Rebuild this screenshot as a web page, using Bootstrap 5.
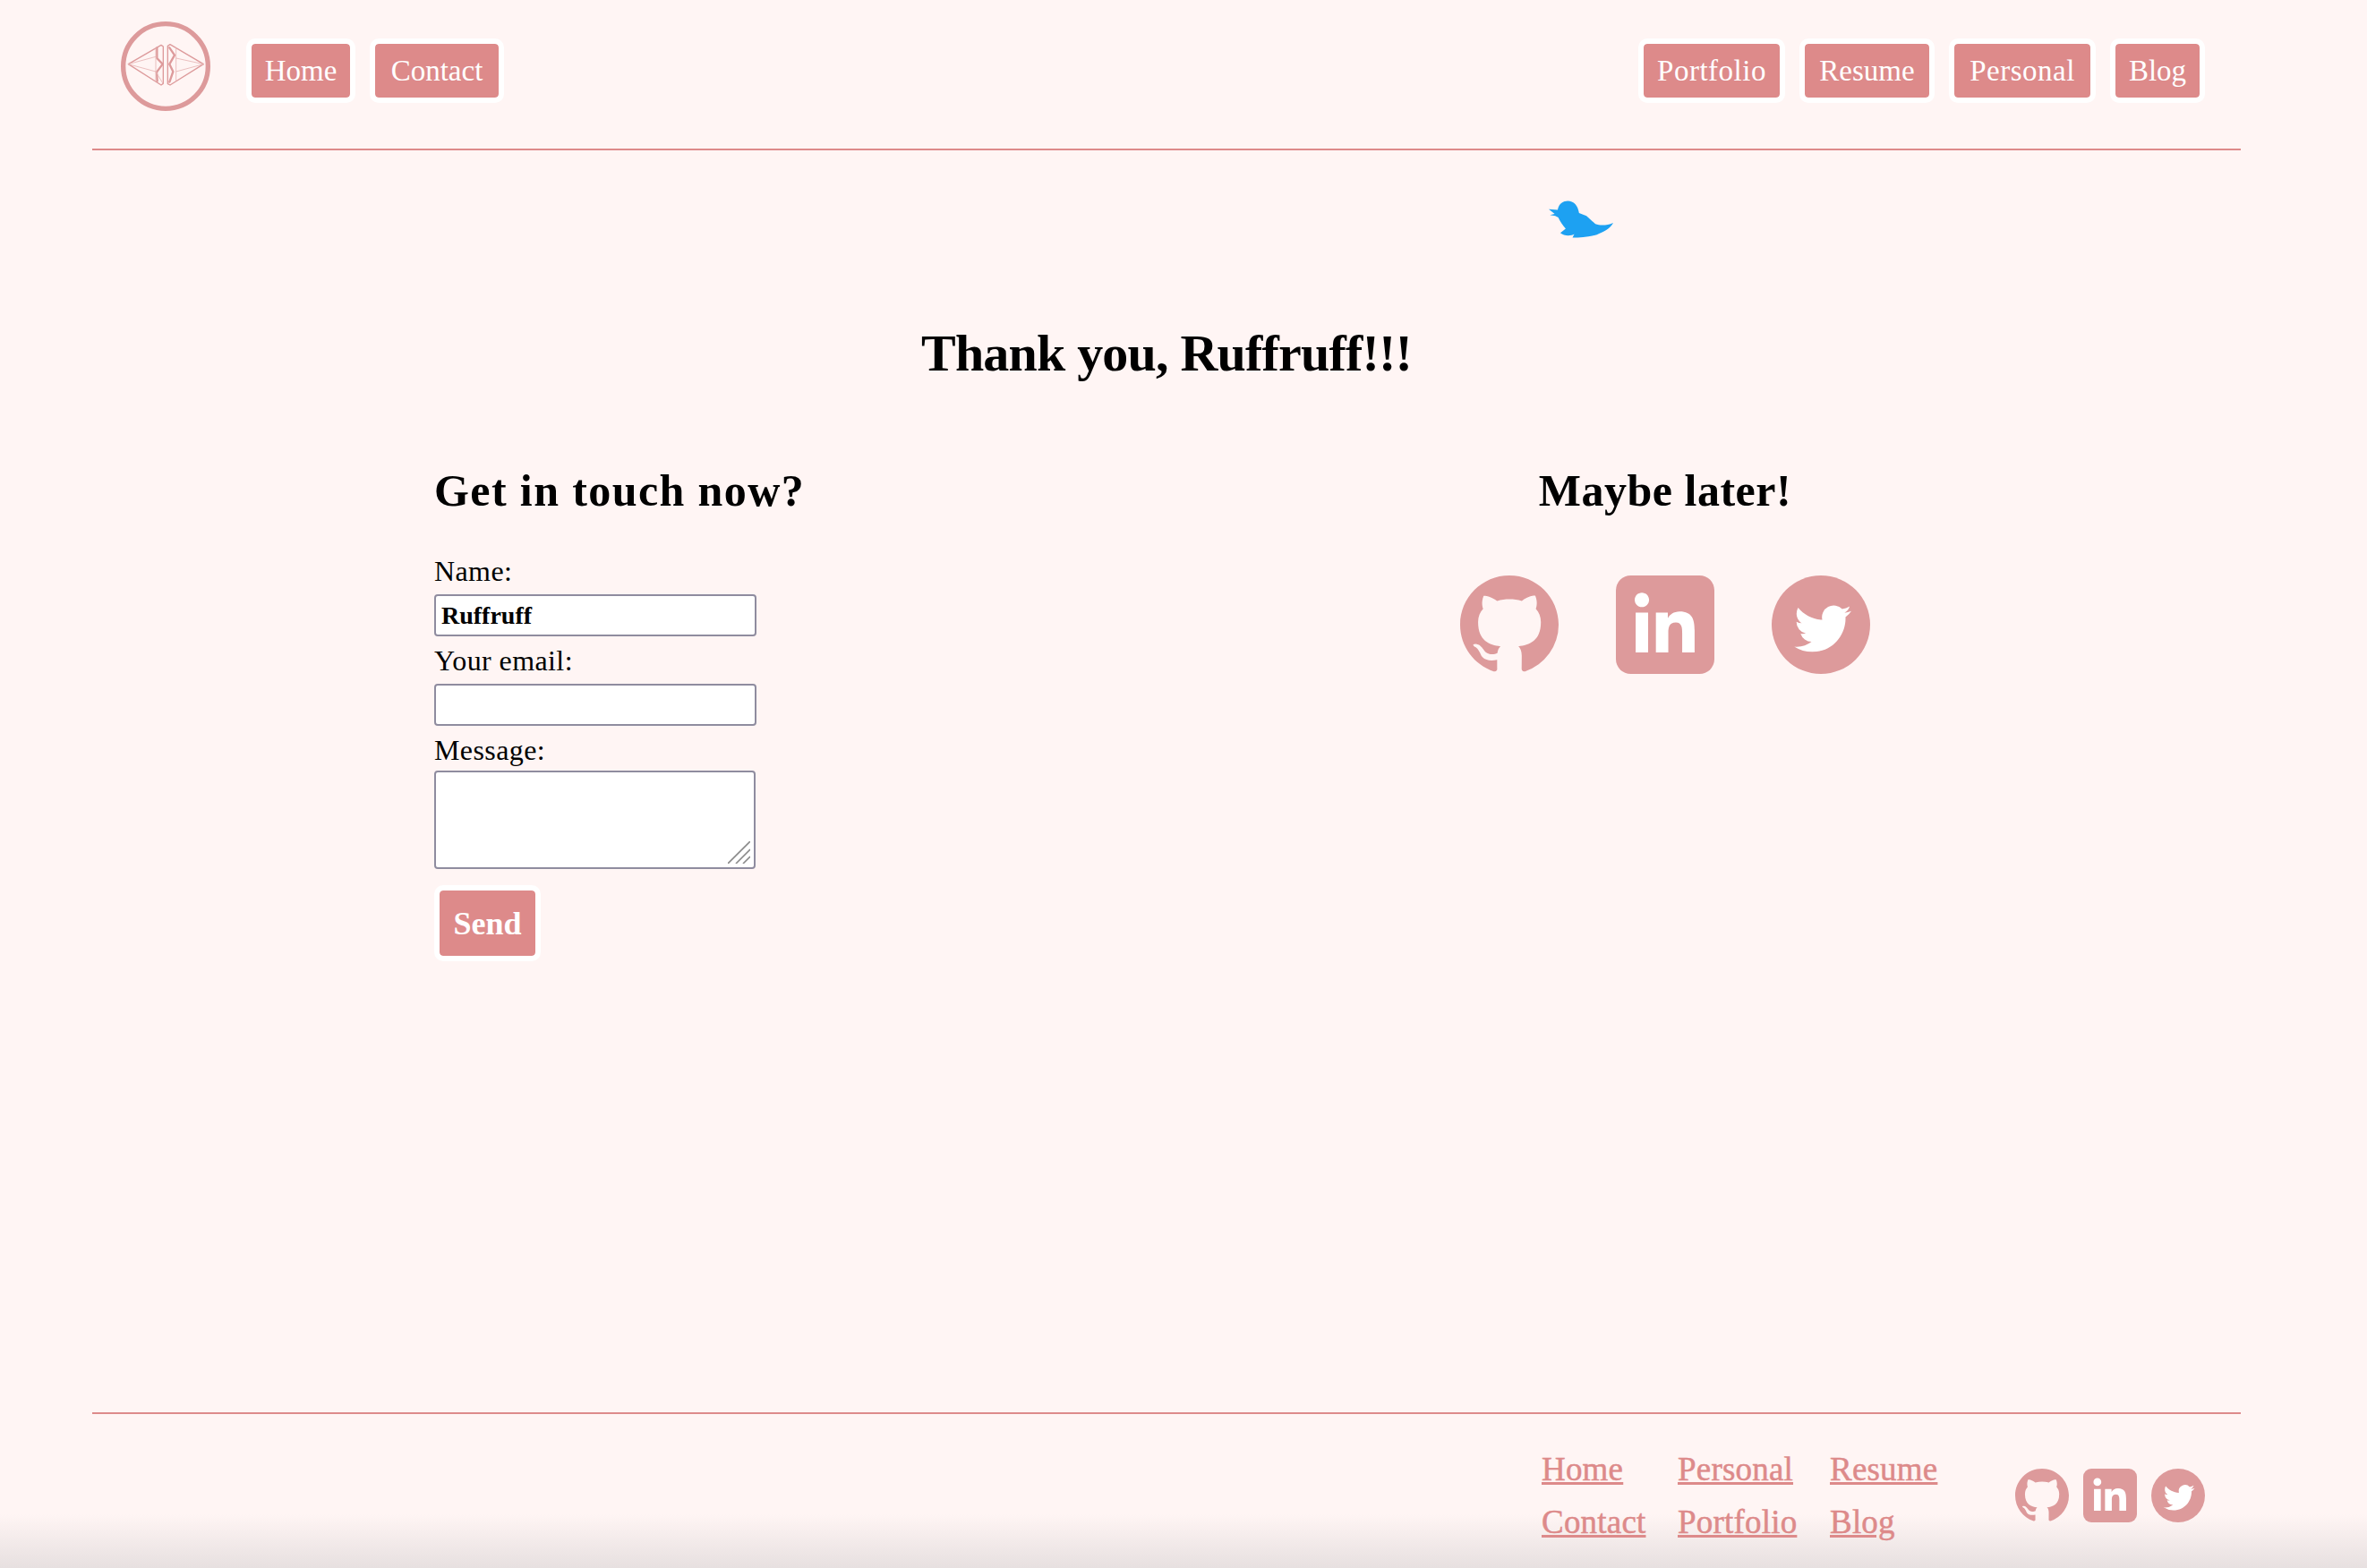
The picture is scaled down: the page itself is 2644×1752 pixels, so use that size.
<!DOCTYPE html>
<html lang="en">
<head>
  <meta charset="UTF-8" />
  <meta name="viewport" content="width=device-width, initial-scale=1.0"/>
  <title>Contact | Thank you</title>
  <link href="https://cdn.jsdelivr.net/npm/bootstrap@5.3.3/dist/css/bootstrap.min.css" rel="stylesheet">
  <style>
    html, body { height: 100%; }

    body {
      min-height: 100vh;
      margin: 0;
      padding: 0 141px 0 103px;
      background: linear-gradient(to bottom, #fff5f4 calc(100% - 60px), #e7e0e0 100%);
      color: #000;
      font-family: "Liberation Serif", serif;
    }

    .top-bar {
      padding: 24px 40px 42px 32px;
      border-bottom: 2px solid #dd8a8a;
    }

    .brand-logo { width: 100px; height: 100px; margin-right: 40px; }

    .top-links { margin-top: 19px; gap: 16px; }

    .pill-link {
      display: block;
      height: 72px;
      border: 6px solid #fff;
      border-radius: 10px;
      background-color: #dd8a8a;
      background-clip: padding-box;
      color: #fff;
      font-size: 33px;
      line-height: 60px;
      text-align: center;
      text-decoration: none;
    }
    .w-home { width: 122px; }
    .w-contact { width: 150px; }
    .w-portfolio { width: 164px; letter-spacing: .5px; }
    .w-resume { width: 151px; }
    .w-personal { width: 164px; letter-spacing: .5px; }
    .w-blog { width: 106px; }

    .bird-mark { display: block; width: 74px; height: 44px; margin: 55px 0 0 1626px; }

    .thanks-title {
      margin: 93px 0 0;
      font-size: 58px;
      font-weight: 700;
      line-height: 70px;
      letter-spacing: -.8px;
      text-align: center;
    }

    .two-cols {
      display: grid;
      grid-template-columns: 1035px 680px;
      margin-top: 88px;
      padding-left: 382px;
    }

    .col-title { margin: 0; font-size: 50px; font-weight: 700; line-height: 60px; }
    .col-title-wide { letter-spacing: 1.4px; }
    .col-title-mid { letter-spacing: .5px; }

    .touch-form { width: 360px; padding-top: 33px; }
    .touch-form label { display: block; margin: 7px 0 6px; font-size: 32px; line-height: 40px; letter-spacing: .4px; }

    .touch-form .form-control {
      height: 47px;
      padding: 0 6px;
      border: 2px solid #8f8c9f;
      border-radius: 4px;
      background: #fff;
      box-shadow: none;
      font-size: 28px;
      font-weight: 700;
      color: #000;
    }

    .msg-wrap { width: 359px; height: 110px; margin-top: -3px; }
    .touch-form .msg-wrap textarea.form-control { height: 110px; resize: none; }
    .msg-grip { position: absolute; right: 6px; bottom: 6px; width: 25px; height: 25px; pointer-events: none; }

    .send-btn {
      display: block;
      width: 119px;
      height: 85px;
      margin-top: 18px;
      padding: 0;
      border: 6px solid #fff;
      border-radius: 10px;
      background-color: #dd8a8a;
      background-clip: padding-box;
      color: #fff;
      font-size: 36px;
      font-weight: 700;
    }

    .social-big { margin-top: 65px; gap: 64px; }
    .social-big svg { width: 110px; height: 110px; }

    .bottom-bar {
      margin-top: auto;
      padding: 32px 40px 22px 0;
      border-top: 2px solid #dd8a8a;
    }

    .foot-links {
      display: grid;
      grid-template-columns: 152px 170px 207px;
      font-size: 37px;
      line-height: 59px;
      letter-spacing: .2px;
      -webkit-text-stroke: .5px #dd8a8a;
    }
    .foot-links a { color: #dd8a8a; }

    .social-small { gap: 16px; }
    .social-small svg { width: 60px; height: 60px; }

    .ico-pink { fill: #dd9a9b; }
  </style>
</head>
<body class="d-flex flex-column">

  <!-- Header -->
  <header class="top-bar d-flex align-items-start">
    <svg class="brand-logo flex-shrink-0" viewBox="15 12 300 300" fill="none" stroke-linejoin="round" stroke-linecap="round">
      <circle cx="165" cy="162" r="142" stroke="#dd9a9b" stroke-width="16"/>
      <path d="M40 155 150 91 157 96V220L150 225Z" stroke="#dd9a9b" stroke-width="4"/>
      <path d="M180 89 292 155 180 225 172 221V94Z" stroke="#dd9a9b" stroke-width="4"/>
      <path d="M136 100V135L155 155 135 182 137 212" stroke="#dd9a9b" stroke-width="7"/>
      <path d="M178 100 195 125 178 155 190 180 178 215" stroke="#dd9a9b" stroke-width="7"/>
      <path d="M40 155 132 130M40 155 132 180M132 100V212M132 180 155 218M292 155 200 135M292 155 200 180M200 100V210" stroke="#e6b4b5" stroke-width="2.5"/>
    </svg>
    <nav class="top-links d-flex">
      <a class="pill-link w-home" href="#">Home</a>
      <a class="pill-link w-contact" href="#">Contact</a>
    </nav>
    <nav class="top-links d-flex ms-auto">
      <a class="pill-link w-portfolio" href="#">Portfolio</a>
      <a class="pill-link w-resume" href="#">Resume</a>
      <a class="pill-link w-personal" href="#">Personal</a>
      <a class="pill-link w-blog" href="#">Blog</a>
    </nav>
  </header>

  <main>
    <svg class="bird-mark" viewBox="85 100 223 132">
      <path fill="#1da1f2" d="M88 132 118 134C122 112 138 104 152 104 172 105 186 118 190 145L215 155 245 182C262 188 285 187 305 178 298 192 285 203 250 218 225 225 195 228 168 228L174 216C165 222 140 224 127 212L145 198C135 185 125 172 120 160L110 155 92 152 108 148Z"/>
    </svg>

    <h1 class="thanks-title">Thank you, Ruffruff!!!</h1>

    <div class="two-cols">
      <section>
        <h2 class="col-title col-title-wide">Get in touch now?</h2>
        <form class="touch-form">
          <label for="name">Name:</label>
          <input type="text" class="form-control" id="name" value="Ruffruff" />
          <label for="email">Your email:</label>
          <input type="email" class="form-control" id="email" />
          <label for="message">Message:</label>
          <div class="msg-wrap position-relative">
            <textarea class="form-control" id="message"></textarea>
            <svg class="msg-grip" viewBox="0 0 25 25" stroke="#8a8a8a" stroke-width="1.6" fill="none">
              <path d="M0 25 25 0M9 25 25 9M17 25 25 17"/>
            </svg>
          </div>
          <button type="button" class="send-btn">Send</button>
        </form>
      </section>

      <section class="text-center">
        <h2 class="col-title col-title-mid">Maybe later!</h2>
        <div class="social-big d-flex justify-content-center">
          <svg viewBox="0 0 16 16" class="ico-pink"><path d="M8 0C3.58 0 0 3.58 0 8c0 3.54 2.29 6.53 5.47 7.59.4.07.55-.17.55-.38 0-.19-.01-.82-.01-1.49-2.01.37-2.53-.49-2.69-.94-.09-.23-.48-.94-.82-1.13-.28-.15-.68-.52-.01-.53.63-.01 1.08.58 1.23.82.72 1.21 1.87.87 2.33.66.07-.52.28-.87.51-1.07-1.78-.2-3.64-.89-3.64-3.95 0-.87.31-1.59.82-2.15-.08-.2-.36-1.02.08-2.12 0 0 .67-.21 2.2.82.64-.18 1.32-.27 2-.27.68 0 1.36.09 2 .27 1.53-1.04 2.2-.82 2.2-.82.44 1.1.16 1.92.08 2.12.51.56.82 1.27.82 2.15 0 3.07-1.87 3.75-3.65 3.95.29.25.54.73.54 1.48 0 1.07-.01 1.93-.01 2.2 0 .21.15.46.55.38A8.013 8.013 0 0016 8c0-4.42-3.58-8-8-8z"/></svg>
          <svg viewBox="0 0 24 24"><rect class="ico-pink" width="24" height="24" rx="3.6"/><path fill="#fff" transform="translate(1.8 1.4) scale(.85)" d="M20.447 20.452h-3.554v-5.569c0-1.328-.027-3.037-1.852-3.037-1.853 0-2.136 1.445-2.136 2.939v5.667H9.351V9h3.414v1.561h.046c.477-.9 1.637-1.85 3.37-1.85 3.601 0 4.267 2.37 4.267 5.455v6.286zM5.337 7.433c-1.144 0-2.063-.926-2.063-2.065 0-1.138.92-2.063 2.063-2.063 1.14 0 2.064.925 2.064 2.063 0 1.139-.925 2.065-2.064 2.065zm1.782 13.019H3.555V9h3.564v11.452z"/></svg>
          <svg viewBox="0 0 24 24"><circle class="ico-pink" cx="12" cy="12" r="12"/><path fill="#fff" transform="translate(5.5 6) scale(.58)" d="M23.953 4.57a10 10 0 01-2.825.775 4.958 4.958 0 002.163-2.723c-.951.555-2.005.959-3.127 1.184a4.92 4.92 0 00-8.384 4.482C7.69 8.095 4.067 6.13 1.64 3.162a4.822 4.822 0 00-.666 2.475c0 1.71.87 3.213 2.188 4.096a4.904 4.904 0 01-2.228-.616v.06a4.923 4.923 0 003.946 4.827 4.996 4.996 0 01-2.212.085 4.936 4.936 0 004.604 3.417 9.867 9.867 0 01-6.102 2.105c-.39 0-.779-.023-1.17-.067a13.995 13.995 0 007.557 2.209c9.053 0 13.998-7.496 13.998-13.985 0-.21 0-.42-.015-.63A9.935 9.935 0 0024 4.59z"/></svg>
        </div>
      </section>
    </div>
  </main>

  <!-- Footer -->
  <footer class="bottom-bar d-flex justify-content-end align-items-center">
    <div class="foot-links">
      <a href="#">Home</a><a href="#">Personal</a><a href="#">Resume</a>
      <a href="#">Contact</a><a href="#">Portfolio</a><a href="#">Blog</a>
    </div>
    <div class="social-small d-flex">
      <svg viewBox="0 0 16 16" class="ico-pink"><path d="M8 0C3.58 0 0 3.58 0 8c0 3.54 2.29 6.53 5.47 7.59.4.07.55-.17.55-.38 0-.19-.01-.82-.01-1.49-2.01.37-2.53-.49-2.69-.94-.09-.23-.48-.94-.82-1.13-.28-.15-.68-.52-.01-.53.63-.01 1.08.58 1.23.82.72 1.21 1.87.87 2.33.66.07-.52.28-.87.51-1.07-1.78-.2-3.64-.89-3.64-3.95 0-.87.31-1.59.82-2.15-.08-.2-.36-1.02.08-2.12 0 0 .67-.21 2.2.82.64-.18 1.32-.27 2-.27.68 0 1.36.09 2 .27 1.53-1.04 2.2-.82 2.2-.82.44 1.1.16 1.92.08 2.12.51.56.82 1.27.82 2.15 0 3.07-1.87 3.75-3.65 3.95.29.25.54.73.54 1.48 0 1.07-.01 1.93-.01 2.2 0 .21.15.46.55.38A8.013 8.013 0 0016 8c0-4.42-3.58-8-8-8z"/></svg>
      <svg viewBox="0 0 24 24"><rect class="ico-pink" width="24" height="24" rx="3.6"/><path fill="#fff" transform="translate(1.8 1.4) scale(.85)" d="M20.447 20.452h-3.554v-5.569c0-1.328-.027-3.037-1.852-3.037-1.853 0-2.136 1.445-2.136 2.939v5.667H9.351V9h3.414v1.561h.046c.477-.9 1.637-1.85 3.37-1.85 3.601 0 4.267 2.37 4.267 5.455v6.286zM5.337 7.433c-1.144 0-2.063-.926-2.063-2.065 0-1.138.92-2.063 2.063-2.063 1.14 0 2.064.925 2.064 2.063 0 1.139-.925 2.065-2.064 2.065zm1.782 13.019H3.555V9h3.564v11.452z"/></svg>
      <svg viewBox="0 0 24 24"><circle class="ico-pink" cx="12" cy="12" r="12"/><path fill="#fff" transform="translate(5.5 6) scale(.58)" d="M23.953 4.57a10 10 0 01-2.825.775 4.958 4.958 0 002.163-2.723c-.951.555-2.005.959-3.127 1.184a4.92 4.92 0 00-8.384 4.482C7.69 8.095 4.067 6.13 1.64 3.162a4.822 4.822 0 00-.666 2.475c0 1.71.87 3.213 2.188 4.096a4.904 4.904 0 01-2.228-.616v.06a4.923 4.923 0 003.946 4.827 4.996 4.996 0 01-2.212.085 4.936 4.936 0 004.604 3.417 9.867 9.867 0 01-6.102 2.105c-.39 0-.779-.023-1.17-.067a13.995 13.995 0 007.557 2.209c9.053 0 13.998-7.496 13.998-13.985 0-.21 0-.42-.015-.63A9.935 9.935 0 0024 4.59z"/></svg>
    </div>
  </footer>

  <script src="https://cdn.jsdelivr.net/npm/bootstrap@5.3.3/dist/js/bootstrap.bundle.min.js"></script>
</body>
</html>
